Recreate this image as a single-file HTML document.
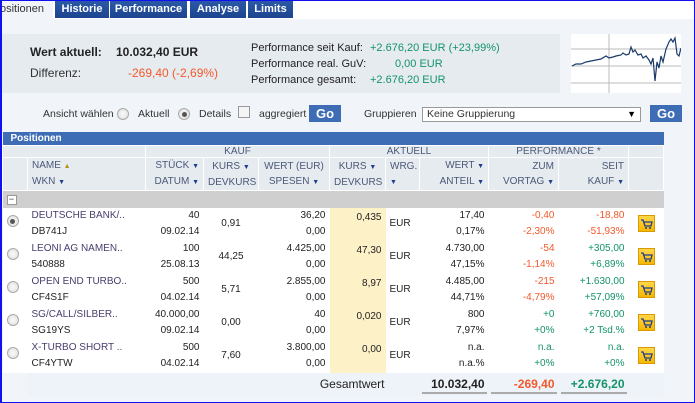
<!DOCTYPE html>
<html><head><meta charset="utf-8"><style>
*{box-sizing:border-box;margin:0;padding:0}
body{width:695px;height:403px;overflow:hidden;background:#f1f5fa;font-family:"Liberation Sans",Arial,sans-serif;font-size:11px;color:#222;position:relative}
.frame{position:absolute;left:0;top:0;width:695px;height:403px;border:1px solid #1010f0;border-left-width:2px;pointer-events:none;z-index:9}
.topw{position:absolute;left:0;top:0;width:695px;height:19px;background:#fff}
.tab{position:absolute;top:0;height:18px;background:linear-gradient(#2c5aa8,#1d4590);color:#fff;font-weight:bold;font-size:11px;line-height:18px;text-align:center}
.tab.act{background:#f1f5fa;color:#333;font-weight:normal;text-align:left;height:19px}
.sum{position:absolute;left:2px;top:34px;width:558px;height:59px;background:#e6ebf0}
.chart{position:absolute;left:571px;top:34px;width:110px;height:59px;background:#fff}
.abs{position:absolute;white-space:nowrap}
.g{color:#14936a}.r{color:#f25a2a}
.radio{display:inline-block;width:12px;height:12px;border-radius:50%;border:1px solid #aaa;background:radial-gradient(#fafafa,#ddd)}
.radio.on::after{content:"";display:block;width:5px;height:5px;border-radius:50%;background:#555;margin:2.5px}
.go{position:absolute;background:#3f6db5;color:#fff;font-weight:bold;font-size:13px;text-align:center;line-height:17px;height:17px}
.ctl{font-size:10.5px;color:#333}
table{position:absolute;left:2px;top:132px;border-collapse:collapse;table-layout:fixed;width:661px;font-size:10px}
td{padding:0 4px;vertical-align:middle;white-space:nowrap;overflow:hidden}
.bar td{background:#3f6db5;color:#fff;font-weight:bold;height:13px;font-size:10px;padding-left:8px;line-height:13px}
.h td{background:#e6ebf0;color:#4b5878;border:1px solid #fff;font-size:10px}
.h1 td{height:12px;line-height:10px;text-align:center}
.h2 td{height:33px;line-height:15px}
.ar{color:#1d3f8f;font-size:7px}
.grp td{background:#cfcfcf;height:17px}
.row td{height:33px;line-height:16px;background:#fff}
.row td.y{background:#fdf1c8;vertical-align:top;padding-top:2px}
.nm{color:#4a3d6e}
.rt{text-align:right}
.cart{display:inline-block;width:17px;height:17px;background:linear-gradient(#ffd64a,#f6b800);border:1px solid #d89a00;vertical-align:middle}
.tot td{height:23px;background:#eef3f9}
.tv{font-weight:bold;font-size:12px;text-align:right;padding:0 2px!important}
.tv span{display:block;border-bottom:2px solid #aaa;padding:2px 2px 1px}
</style></head><body>
<div class="topw"></div>
<div class="tab act" style="left:0;width:53px">ositionen</div>
<div class="tab" style="left:55px;width:54px">Historie</div>
<div class="tab" style="left:110px;width:77px">Performance</div>
<div class="tab" style="left:190px;width:56px">Analyse</div>
<div class="tab" style="left:248px;width:45px">Limits</div>

<div class="sum"></div>
<div class="abs" style="left:30px;top:45px;font-size:12px;font-weight:bold">Wert aktuell:</div>
<div class="abs" style="left:116px;top:45px;font-size:12px;font-weight:bold">10.032,40 EUR</div>
<div class="abs" style="left:30px;top:66px;font-size:12px;color:#333">Differenz:</div>
<div class="abs r" style="left:128px;top:66px;font-size:12px">-269,40 (-2,69%)</div>
<div class="abs" style="left:251px;top:42px">Performance seit Kauf:</div>
<div class="abs" style="left:251px;top:58px">Performance real. GuV:</div>
<div class="abs" style="left:251px;top:74px">Performance gesamt:</div>
<div class="abs g" style="left:370px;top:42px">+2.676,20 EUR (+23,99%)</div>
<div class="abs g" style="left:395px;top:58px">0,00 EUR</div>
<div class="abs g" style="left:370px;top:74px">+2.676,20 EUR</div>
<div class="chart"><svg width="110" height="59" viewBox="0 0 110 59">
<g stroke="#bbb" stroke-width="1"><line x1="0" y1="15" x2="110" y2="15"/><line x1="0" y1="32" x2="110" y2="32"/><line x1="0" y1="49" x2="110" y2="49"/><line x1="38" y1="0" x2="38" y2="59"/></g>
<polyline fill="none" stroke="#1a3a6a" stroke-width="1.2" points="1,32 5,30 10,30 15,28 20,27 25,26 30,25 35,22 38,24 42,23 45,22 50,21 52,19 55,21 58,20 60,13 62,18 64,16 67,21 70,20 72,24 75,22 78,26 80,30 82,24 84,47 86,28 88,34 90,22 92,28 95,15 98,8 100,5 102,8 104,4 106,20 108,22 110,14"/>
</svg></div>

<div class="abs ctl" style="left:43px;top:108px">Ansicht wählen</div>
<span class="radio abs" style="left:117px;top:108px"></span>
<div class="abs ctl" style="left:138px;top:108px">Aktuell</div>
<span class="radio on abs" style="left:178px;top:108px"></span>
<div class="abs ctl" style="left:199px;top:108px">Details</div>
<span class="abs" style="left:238px;top:106px;width:12px;height:12px;border:1px solid #999;background:#f4f4f4"></span>
<div class="abs ctl" style="left:259px;top:108px">aggregiert</div>
<div class="go" style="left:309px;top:105px;width:32px">Go</div>
<div class="abs ctl" style="left:364px;top:108px">Gruppieren</div>
<div class="abs ctl" style="left:422px;top:107px;width:219px;height:15px;border:1px solid #999;background:#fff;padding-left:4px;line-height:13px">Keine Gruppierung<span style="position:absolute;right:4px;font-size:9px;color:#000">▼</span></div>
<div class="go" style="left:650px;top:105px;width:32px">Go</div>

<table>
<colgroup><col style="width:25px"><col style="width:118px"><col style="width:58px"><col style="width:55px"><col style="width:71px"><col style="width:56px"><col style="width:34px"><col style="width:69px"><col style="width:70px"><col style="width:70px"><col style="width:35px"></colgroup>
<tr class="bar"><td colspan="11">Positionen</td></tr>
<tr class="h h1"><td colspan="2"></td><td colspan="3">KAUF</td><td colspan="3">AKTUELL</td><td colspan="2">PERFORMANCE *</td><td></td></tr>
<tr class="h h2"><td></td><td>NAME <span style="color:#b8901a;font-size:7px">▲</span><br>WKN <span class="ar">▼</span></td>
<td class="rt">STÜCK <span class="ar">▼</span><br>DATUM <span class="ar">▼</span></td>
<td style="text-align:center">KURS <span class="ar">▼</span><br>DEVKURS</td>
<td style="text-align:center">WERT (EUR)<br>SPESEN <span class="ar">▼</span></td>
<td style="text-align:center">KURS <span class="ar">▼</span><br>DEVKURS</td>
<td>WRG.<br><span class="ar">▼</span></td>
<td class="rt">WERT <span class="ar">▼</span><br>ANTEIL <span class="ar">▼</span></td>
<td class="rt">ZUM<br>VORTAG <span class="ar">▼</span></td>
<td class="rt">SEIT<br>KAUF <span class="ar">▼</span></td><td></td></tr>
<tr class="grp"><td><span style="display:inline-block;width:10px;height:10px;background:#fff;border:1px solid #999;font-size:9px;line-height:7px;text-align:center;color:#333">−</span></td><td colspan="10"></td></tr>

<tr class="row"><td><span class="radio on"></span></td><td class="nm">DEUTSCHE BANK/..<br><span style="color:#222">DB741J</span></td><td class="rt">40<br>09.02.14</td><td style="text-align:center">0,91</td><td class="rt">36,20<br>0,00</td><td class="y rt">0,435</td><td>EUR</td><td class="rt">17,40<br>0,17%</td><td class="rt r">-0,40<br>-2,30%</td><td class="rt r">-18,80<br>-51,93%</td><td style="text-align:center"><span class="cart"><svg width="15" height="15" viewBox="0 0 15 15"><path d="M2 4h2l2 6h6l1-4H5" fill="none" stroke="#1d3f8f" stroke-width="1.3"/><circle cx="7" cy="12" r="1" fill="#1d3f8f"/><circle cx="11" cy="12" r="1" fill="#1d3f8f"/></svg></span></td></tr>
<tr class="row"><td><span class="radio"></span></td><td class="nm">LEONI AG NAMEN..<br><span style="color:#222">540888</span></td><td class="rt">100<br>25.08.13</td><td style="text-align:center">44,25</td><td class="rt">4.425,00<br>0,00</td><td class="y rt">47,30</td><td>EUR</td><td class="rt">4.730,00<br>47,15%</td><td class="rt r">-54<br>-1,14%</td><td class="rt g">+305,00<br>+6,89%</td><td style="text-align:center"><span class="cart"><svg width="15" height="15" viewBox="0 0 15 15"><path d="M2 4h2l2 6h6l1-4H5" fill="none" stroke="#1d3f8f" stroke-width="1.3"/><circle cx="7" cy="12" r="1" fill="#1d3f8f"/><circle cx="11" cy="12" r="1" fill="#1d3f8f"/></svg></span></td></tr>
<tr class="row"><td><span class="radio"></span></td><td class="nm">OPEN END TURBO..<br><span style="color:#222">CF4S1F</span></td><td class="rt">500<br>04.02.14</td><td style="text-align:center">5,71</td><td class="rt">2.855,00<br>0,00</td><td class="y rt">8,97</td><td>EUR</td><td class="rt">4.485,00<br>44,71%</td><td class="rt r">-215<br>-4,79%</td><td class="rt g">+1.630,00<br>+57,09%</td><td style="text-align:center"><span class="cart"><svg width="15" height="15" viewBox="0 0 15 15"><path d="M2 4h2l2 6h6l1-4H5" fill="none" stroke="#1d3f8f" stroke-width="1.3"/><circle cx="7" cy="12" r="1" fill="#1d3f8f"/><circle cx="11" cy="12" r="1" fill="#1d3f8f"/></svg></span></td></tr>
<tr class="row"><td><span class="radio"></span></td><td class="nm">SG/CALL/SILBER..<br><span style="color:#222">SG19YS</span></td><td class="rt">40.000,00<br>09.02.14</td><td style="text-align:center">0,00</td><td class="rt">40<br>0,00</td><td class="y rt">0,020</td><td>EUR</td><td class="rt">800<br>7,97%</td><td class="rt g">+0<br>+0%</td><td class="rt g">+760,00<br>+2 Tsd.%</td><td style="text-align:center"><span class="cart"><svg width="15" height="15" viewBox="0 0 15 15"><path d="M2 4h2l2 6h6l1-4H5" fill="none" stroke="#1d3f8f" stroke-width="1.3"/><circle cx="7" cy="12" r="1" fill="#1d3f8f"/><circle cx="11" cy="12" r="1" fill="#1d3f8f"/></svg></span></td></tr>
<tr class="row"><td><span class="radio"></span></td><td class="nm">X-TURBO SHORT ..<br><span style="color:#222">CF4YTW</span></td><td class="rt">500<br>04.02.14</td><td style="text-align:center">7,60</td><td class="rt">3.800,00<br>0,00</td><td class="y rt">0,00</td><td>EUR</td><td class="rt">n.a.<br>n.a.%</td><td class="rt g">n.a.<br>+0%</td><td class="rt g">n.a.<br>+0%</td><td style="text-align:center"><span class="cart"><svg width="15" height="15" viewBox="0 0 15 15"><path d="M2 4h2l2 6h6l1-4H5" fill="none" stroke="#1d3f8f" stroke-width="1.3"/><circle cx="7" cy="12" r="1" fill="#1d3f8f"/><circle cx="11" cy="12" r="1" fill="#1d3f8f"/></svg></span></td></tr>
<tr class="tot"><td style="background:#f1f5fa"></td><td colspan="5" class="rt" style="font-size:12px;padding-right:1px">Gesamtwert</td><td></td><td class="tv"><span>10.032,40</span></td><td class="tv r"><span>-269,40</span></td><td class="tv g"><span>+2.676,20</span></td><td></td></tr>
</table>
<div class="frame"></div>
</body></html>
